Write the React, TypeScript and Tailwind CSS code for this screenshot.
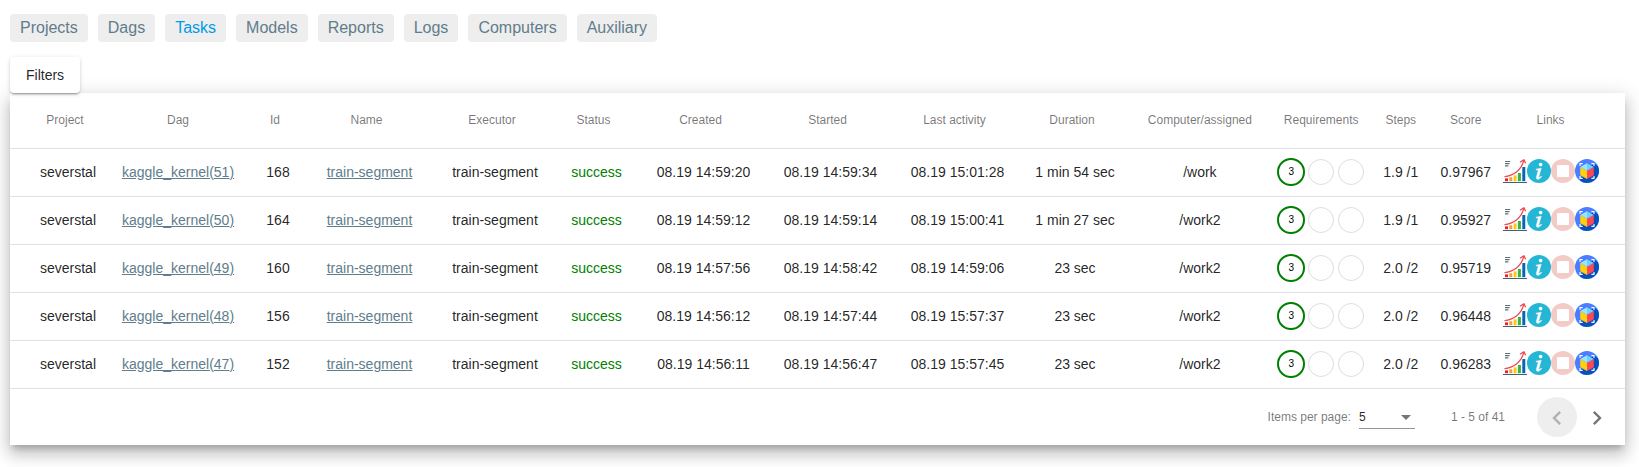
import React from 'react';

const tabs = ['Projects', 'Dags', 'Tasks', 'Models', 'Reports', 'Logs', 'Computers', 'Auxiliary'];

const columns = [
  { label: 'Project', sortable: true },
  { label: 'Dag', sortable: false },
  { label: 'Id', sortable: true },
  { label: 'Name', sortable: true },
  { label: 'Executor', sortable: true },
  { label: 'Status', sortable: true },
  { label: 'Created', sortable: true },
  { label: 'Started', sortable: true },
  { label: 'Last activity', sortable: true },
  { label: 'Duration', sortable: true },
  { label: 'Computer/assigned', sortable: false },
  { label: 'Requirements', sortable: false },
  { label: 'Steps', sortable: false },
  { label: 'Score', sortable: false },
  { label: 'Links', sortable: false },
];

const rows = [
  { dag: 51, id: 168, created: '08.19 14:59:20', started: '08.19 14:59:34', last: '08.19 15:01:28', duration: '1 min 54 sec', computer: '/work', steps: '1.9 /1', score: '0.97967' },
  { dag: 50, id: 164, created: '08.19 14:59:12', started: '08.19 14:59:14', last: '08.19 15:00:41', duration: '1 min 27 sec', computer: '/work2', steps: '1.9 /1', score: '0.95927' },
  { dag: 49, id: 160, created: '08.19 14:57:56', started: '08.19 14:58:42', last: '08.19 14:59:06', duration: '23 sec', computer: '/work2', steps: '2.0 /2', score: '0.95719' },
  { dag: 48, id: 156, created: '08.19 14:56:12', started: '08.19 14:57:44', last: '08.19 15:57:37', duration: '23 sec', computer: '/work2', steps: '2.0 /2', score: '0.96448' },
  { dag: 47, id: 152, created: '08.19 14:56:11', started: '08.19 14:56:47', last: '08.19 15:57:45', duration: '23 sec', computer: '/work2', steps: '2.0 /2', score: '0.96283' },
];

const rowGrid =
  'grid grid-cols-[68px_152px_48px_135px_116px_87px_127px_127px_127px_108px_141.8px_100.8px_58.4px_71.6px_98px] items-center justify-items-center whitespace-nowrap border-b border-black/12 px-6 pb-0.5';

function ChartIcon() {
  return (
    <svg className="size-6" viewBox="0 0 24 24">
      <path d="M2 2.500h5.200M2 4.700h4.600M2 6.900h3.400" stroke="#5b6f7c" strokeWidth="1.200" />
      <rect x="2" y="19.400" width="3" height="2.800" fill="#e8242f" />
      <rect x="6.300" y="18.200" width="3" height="4" fill="#fb9a45" />
      <rect x="10.600" y="16.400" width="3" height="5.800" fill="#fdc90f" />
      <rect x="14.900" y="14" width="3" height="8.200" fill="#38b04d" />
      <rect x="19.300" y="8" width="3" height="14.200" fill="#0a66ad" />
      <path d="M1.500 17.600C10 17 18.500 11.500 20.800 1.200" fill="none" stroke="#ee4450" strokeWidth="1.200" />
      <path d="M17 3.200L20.900 .8 22.600 4.300" fill="none" stroke="#ee4450" strokeWidth="1.300" />
      <path d="M0 23.500h24" stroke="#44607a" strokeWidth="1" />
    </svg>
  );
}

function InfoIcon() {
  return (
    <svg className="size-6" viewBox="0 0 24 24">
      <circle cx="12" cy="12" r="12" fill="#26b6d5" />
      <circle cx="13.600" cy="5.600" r="1.800" fill="#fff" />
      <path d="M9 10.300l5.200-1.100-2.300 8.300c-.4 1.500.4 1.400 2.200-.5l.5.400c-2 3.300-5.600 4-5.200.8l1.700-6.500c.2-.8-.5-.9-2.100-.8z" fill="#fff" stroke="#fff" strokeWidth=".5" />
    </svg>
  );
}

function StopIcon() {
  return (
    <svg className="size-6" viewBox="0 0 24 24">
      <circle cx="12" cy="12" r="12" fill="#f2cbc7" />
      <rect x="6" y="6" width="12" height="12" rx="1" fill="#fff" />
    </svg>
  );
}

function CubeIcon() {
  return (
    <svg className="size-6" viewBox="0 0 24 24">
      <circle cx="12" cy="12" r="12" fill="#4a7dff" />
      <path d="M18.500 4L23 7.200A12 12 0 0 1 5.500 22L5 19.600z" fill="#0751bd" />
      <path d="M5 7V4.600h2.600M16.400 4.600H19V7M5 17v2.400h2.600M16.400 19.400H19V17" fill="none" stroke="#fff" strokeWidth="1.100" />
      <path d="M5.200 8L12 11.800V20L5.200 16.200z" fill="#ffd00d" />
      <path d="M18.800 8L12 11.800V20l6.800-3.800z" fill="#ff4756" />
      <path d="M12 4.200L5.200 8 12 11.800z" fill="#9be4ff" />
      <path d="M12 4.200L18.800 8 12 11.800z" fill="#73cef8" />
    </svg>
  );
}

function Requirements() {
  return (
    <div className="flex pt-px">
      <div className="grid size-[30px] place-items-center">
        <div className="flex size-7 items-center justify-center rounded-full border-2 border-[#008000] text-[10px] leading-none text-black">
          3
        </div>
      </div>
      <div className="grid size-[30px] place-items-center">
        <div className="size-[26px] rounded-full border border-[#ddd]" />
      </div>
      <div className="grid size-[30px] place-items-center">
        <div className="size-[26px] rounded-full border border-[#ddd]" />
      </div>
    </div>
  );
}

export default function App() {
  return (
    <div className="flow-root h-[467px] overflow-hidden bg-white px-2.5 font-['Liberation_Sans',Arial,sans-serif] text-black/87">
      <nav className="mt-3.5 flex gap-2.5">
        {tabs.map((tab) => (
          <a
            key={tab}
            className={`h-7 rounded bg-[#eee] px-2.5 text-base leading-7 ${tab === 'Tasks' ? 'text-[#039be5]' : 'text-[#607d8b]'}`}
          >
            {tab}
          </a>
        ))}
      </nav>

      <button className="relative z-10 mt-[15px] block h-9 rounded bg-white px-4 text-sm leading-9 shadow-[0_3px_1px_-2px_rgba(0,0,0,.2),0_2px_2px_0_rgba(0,0,0,.14),0_1px_5px_0_rgba(0,0,0,.12)]">
        Filters
      </button>

      <main className="w-[1615px] bg-white shadow-[0_6px_6px_-3px_rgba(0,0,0,.2),0_10px_14px_1px_rgba(0,0,0,.14),0_4px_18px_3px_rgba(0,0,0,.12)]">
        <div className={`${rowGrid} h-14 text-xs text-black/54`}>
          {columns.map((c) => (
            <div key={c.label} className={c.sortable ? 'pr-1.5' : ''}>
              {c.label}
            </div>
          ))}
        </div>

        {rows.map((r) => (
          <div key={r.id} className={`${rowGrid} h-12 text-sm`}>
            <div>severstal</div>
            <a className="text-[#607d8b] underline">kaggle_kernel({r.dag})</a>
            <div>{r.id}</div>
            <a className="text-[#607d8b] underline">train-segment</a>
            <div>train-segment</div>
            <div className="text-[#008000]">success</div>
            <div>{r.created}</div>
            <div>{r.started}</div>
            <div>{r.last}</div>
            <div>{r.duration}</div>
            <div>{r.computer}</div>
            <Requirements />
            <div>{r.steps}</div>
            <div>{r.score}</div>
            <div className="flex pb-0.5">
              <ChartIcon />
              <InfoIcon />
              <StopIcon />
              <CubeIcon />
            </div>
          </div>
        ))}

        <footer className="flex h-14 items-center justify-end pr-2 text-xs text-black/54">
          <span>Items per page:</span>
          <div className="ml-2 mt-4 flex h-6 w-14 items-start justify-between self-start border-b border-black/42 pr-1 pt-1 text-black/87">
            <span>5</span>
            <svg className="mt-1.5 h-[5px] w-2.5" viewBox="0 0 10 5">
              <path d="M0 0h10L5 5z" fill="#757575" />
            </svg>
          </div>
          <span className="ml-9 mr-8">1 - 5 of 41</span>
          <button className="grid size-10 place-items-center rounded-full bg-[#eee]">
            <svg className="mt-px size-7" viewBox="0 0 24 24">
              <path d="M15.410 7.410L14 6l-6 6 6 6 1.410-1.410L10.830 12z" fill="#b0b0b0" />
            </svg>
          </button>
          <button className="grid size-10 place-items-center rounded-full">
            <svg className="mt-px size-7" viewBox="0 0 24 24">
              <path d="M10 6L8.590 7.410 13.170 12l-4.580 4.590L10 18l6-6z" fill="#757575" />
            </svg>
          </button>
        </footer>
      </main>
    </div>
  );
}
